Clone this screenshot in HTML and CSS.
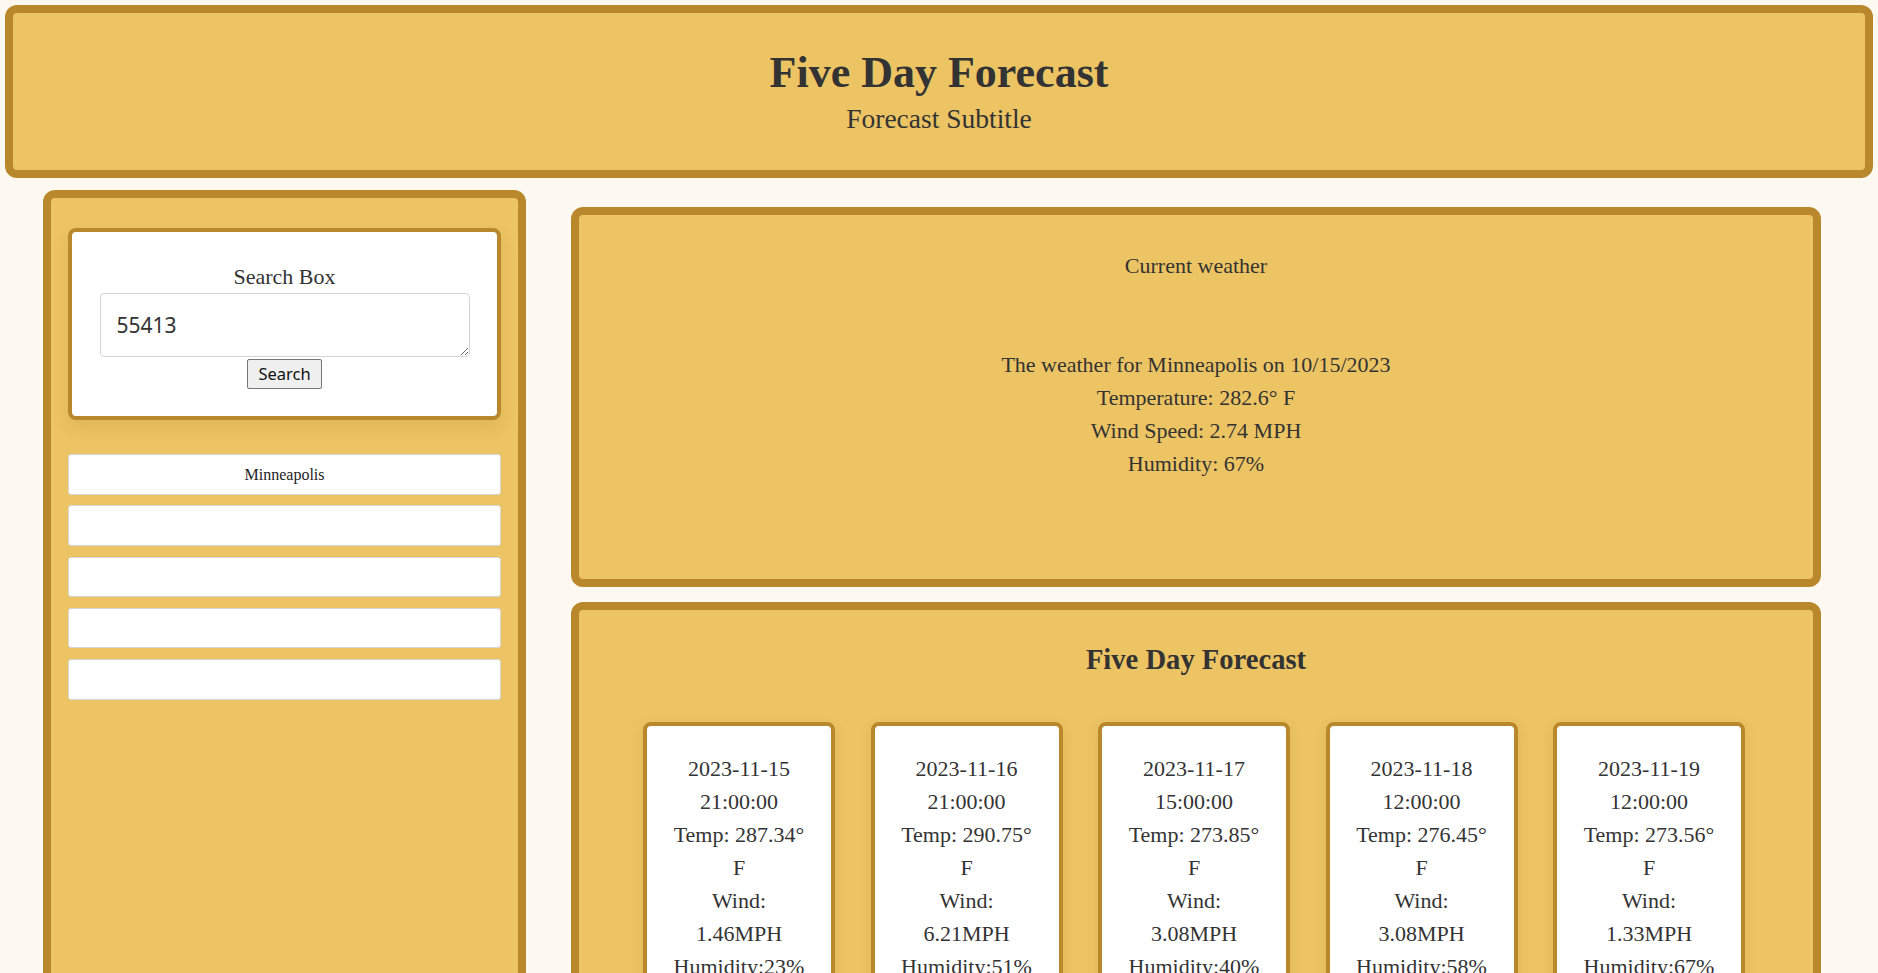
FILE: index.html
```html
<!DOCTYPE html>
<html lang="en">
<head>
<meta charset="utf-8">
<title>Five Day Forecast</title>
<link rel="stylesheet" href="styles.css">
</head>
<body>
<header class="site-header">
  <h1 class="site-title">Five Day Forecast</h1>
  <p class="site-subtitle">Forecast Subtitle</p>
</header>
<main class="layout">
  <aside class="sidebar">
    <div class="search-card">
      <label class="search-label" for="zip">Search Box</label>
      <textarea id="zip" class="search-input">55413</textarea>
      <button class="search-btn" type="button">Search</button>
    </div>
    <div class="history">
      <button class="history-btn" type="button">Minneapolis</button>
      <button class="history-btn" type="button"></button>
      <button class="history-btn" type="button"></button>
      <button class="history-btn" type="button"></button>
      <button class="history-btn" type="button"></button>
    </div>
  </aside>
  <section class="content">
    <div class="panel current">
      <h3 class="current-title">Current weather</h3>
      <div class="current-lines">
        <div>The weather for Minneapolis on 10/15/2023</div>
        <div>Temperature: 282.6° F</div>
        <div>Wind Speed: 2.74 MPH</div>
        <div>Humidity: 67%</div>
      </div>
    </div>
    <div class="panel forecast">
      <h2 class="forecast-title">Five Day Forecast</h2>
      <div class="cards">
        <div class="card">
          <div>2023-11-15 21:00:00</div>
          <div>Temp: 287.34° F</div>
          <div>Wind: 1.46MPH</div>
          <div>Humidity:23%</div>
        </div>
        <div class="card">
          <div>2023-11-16 21:00:00</div>
          <div>Temp: 290.75° F</div>
          <div>Wind: 6.21MPH</div>
          <div>Humidity:51%</div>
        </div>
        <div class="card">
          <div>2023-11-17 15:00:00</div>
          <div>Temp: 273.85° F</div>
          <div>Wind: 3.08MPH</div>
          <div>Humidity:40%</div>
        </div>
        <div class="card">
          <div>2023-11-18 12:00:00</div>
          <div>Temp: 276.45° F</div>
          <div>Wind: 3.08MPH</div>
          <div>Humidity:58%</div>
        </div>
        <div class="card">
          <div>2023-11-19 12:00:00</div>
          <div>Temp: 273.56° F</div>
          <div>Wind: 1.33MPH</div>
          <div>Humidity:67%</div>
        </div>
      </div>
    </div>
  </section>
</main>
</body>
</html>
```
FILE: styles.css
```css
html {
  scrollbar-width: none;
}
html::-webkit-scrollbar,
body::-webkit-scrollbar {
  display: none;
}
* {
  box-sizing: border-box;
}
body {
  margin: 0;
  background: #fdf9f0;
  color: #333;
  font-family: "Liberation Serif", "Times New Roman", serif;
  font-size: 22px;
  line-height: 33px;
}

.site-header {
  margin: 5px 5px 0 5px;
  border: 8px solid #b9882d;
  border-radius: 12px;
  background: #ecc463;
  text-align: center;
  padding: 34px 0 35px;
}
.site-title {
  margin: 0;
  font-size: 44px;
  line-height: 52px;
  font-weight: bold;
}
.site-subtitle {
  margin: 3px 0 0;
  font-size: 27.5px;
  line-height: 33px;
}

.layout {
  display: flex;
  align-items: flex-start;
  padding-left: 43px;
}

.sidebar {
  margin-top: 12px;
  width: 483px;
  min-height: 900px;
  border: 8px solid #b9882d;
  border-radius: 12px;
  background: #ecc463;
  padding: 30px 17px;
}

.search-card {
  display: flex;
  flex-direction: column;
  align-items: center;
  background: #fff;
  border: 4px solid #b9882d;
  border-radius: 8px;
  padding: 28px 0 27px;
  box-shadow: 0 8px 16px rgba(120, 80, 0, 0.12);
}
.search-label {
  line-height: 33px;
}
.search-input {
  margin-top: 0;
  width: 370px;
  height: 64px;
  padding: 17px 16px 15px;
  border: 1px solid #d4d4d4;
  border-radius: 4px;
  font-family: "Noto Sans", "Open Sans", sans-serif;
  font-size: 21px;
  color: #333;
  background: #fff;
  resize: vertical;
}
.search-btn {
  margin-top: 2px;
  height: 30px;
  padding: 0 10px;
  font-family: "Noto Sans", "Open Sans", sans-serif;
  font-size: 16.5px;
  line-height: 22px;
  color: #111;
  background: #efefef;
  border: 1px solid #767676;
  border-radius: 2px;
}

.history {
  display: flex;
  flex-direction: column;
  gap: 10.75px;
  margin-top: 34px;
}
.history-btn {
  height: 40.5px;
  width: 100%;
  background: #fff;
  border: 1px solid #d6d6d6;
  border-radius: 3px;
  font-family: "Liberation Serif", "Times New Roman", serif;
  font-size: 16px;
  color: #222;
  padding: 1px 0 0;
}

.content {
  margin-left: 45px;
  margin-top: 29px;
  width: 1250px;
  display: flex;
  flex-direction: column;
  gap: 15px;
}

.panel {
  border: 8px solid #b9882d;
  border-radius: 12px;
  background: #ecc463;
  text-align: center;
}

.current {
  padding: 34px 0 99px;
}
.current-title {
  margin: 0;
  font-size: 22px;
  font-weight: normal;
  line-height: 33px;
}
.current-lines {
  margin-top: 66px;
}

.forecast {
  padding: 28px 0 60px;
}
.forecast-title {
  margin: 0;
  font-size: 28.6px;
  line-height: 43px;
  font-weight: bold;
}
.cards {
  margin-top: 41px;
  display: flex;
  justify-content: center;
  gap: 35.5px;
  padding-right: 4px;
}
.card {
  width: 192px;
  background: #fff;
  border: 4px solid #b9882d;
  border-radius: 8px;
  padding: 26px 25px 24px;
  box-shadow: 0 4px 14px rgba(120, 80, 0, 0.12);
}
```
